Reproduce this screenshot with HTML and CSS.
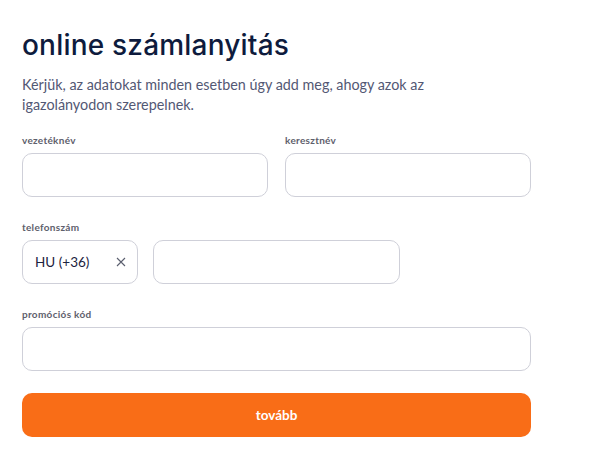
FILE: index.html
```html
<!DOCTYPE html>
<html lang="hu">
<head>
<meta charset="utf-8">
<link rel="stylesheet" href="styles.css">
</head>
<body>
<main class="page">
  <h1 class="title">online számlanyitás</h1>
  <p class="intro">Kérjük, az adatokat minden esetben úgy add meg, ahogy azok az igazolányodon szerepelnek.</p>
  <form class="form">
    <div class="row two">
      <div class="field">
        <label class="label">vezetéknév</label>
        <div class="input"></div>
      </div>
      <div class="field">
        <label class="label">keresztnév</label>
        <div class="input"></div>
      </div>
    </div>
    <div class="field">
      <label class="label">telefonszám</label>
      <div class="phone">
        <div class="input country"><span>HU (+36)</span>
          <svg class="x" width="10" height="10" viewBox="0 0 10 10"><path d="M1 1L9 9M9 1L1 9" stroke="#5a5e6e" stroke-width="1.1" fill="none"/></svg>
        </div>
        <div class="input number"></div>
      </div>
    </div>
    <div class="field">
      <label class="label">promóciós kód</label>
      <div class="input"></div>
    </div>
    <button type="button" class="btn">tovább</button>
  </form>
</main>
</body>
</html>
```
FILE: styles.css
```css
* { box-sizing: border-box; }
html, body { margin: 0; background: #fff; }
body { font-family: Lato, "Noto Sans", sans-serif; }
.page { padding: 28px 0 0 22px; width: 531px; }
.title {
  margin: 0;
  font-family: Inter, Lato, sans-serif;
  font-size: 28px;
  font-weight: 500;
  color: #0e1b3d;
  line-height: 34px;
  letter-spacing: 0.2px;
}
.intro {
  margin: 13px 0 0;
  font-size: 14.35px;
  line-height: 20px;
  color: #535874;
  width: 440px;
}
.form { margin-top: 19px; display: flex; flex-direction: column; }
.row.two { display: grid; grid-template-columns: 246px 246px; column-gap: 17px; margin-bottom: 24px; }
.field { display: flex; flex-direction: column; margin-bottom: 24px; }
.row .field { margin-bottom: 0; }
.label {
  font-size: 10px;
  font-weight: 700;
  color: #5e606c;
  line-height: 12px;
  margin-bottom: 7px;
  letter-spacing: 0.3px;
}
.input {
  height: 44px;
  border: 1px solid #cfd0d9;
  border-radius: 10px;
  background: #fff;
}
.phone { display: flex; gap: 15px; }
.country {
  width: 116px;
  display: flex;
  align-items: center;
  justify-content: space-between;
  padding: 0 11px 0 12px;
  font-size: 13.5px;
  color: #1c2340;
}
.number { width: 247px; }
.btn {
  margin-top: -2px;
  height: 44px;
  width: 509px;
  border: 0;
  border-radius: 10px;
  background: #f96d17;
  color: #fff;
  font-family: inherit;
  font-size: 13.5px;
  font-weight: 700;
}
```
